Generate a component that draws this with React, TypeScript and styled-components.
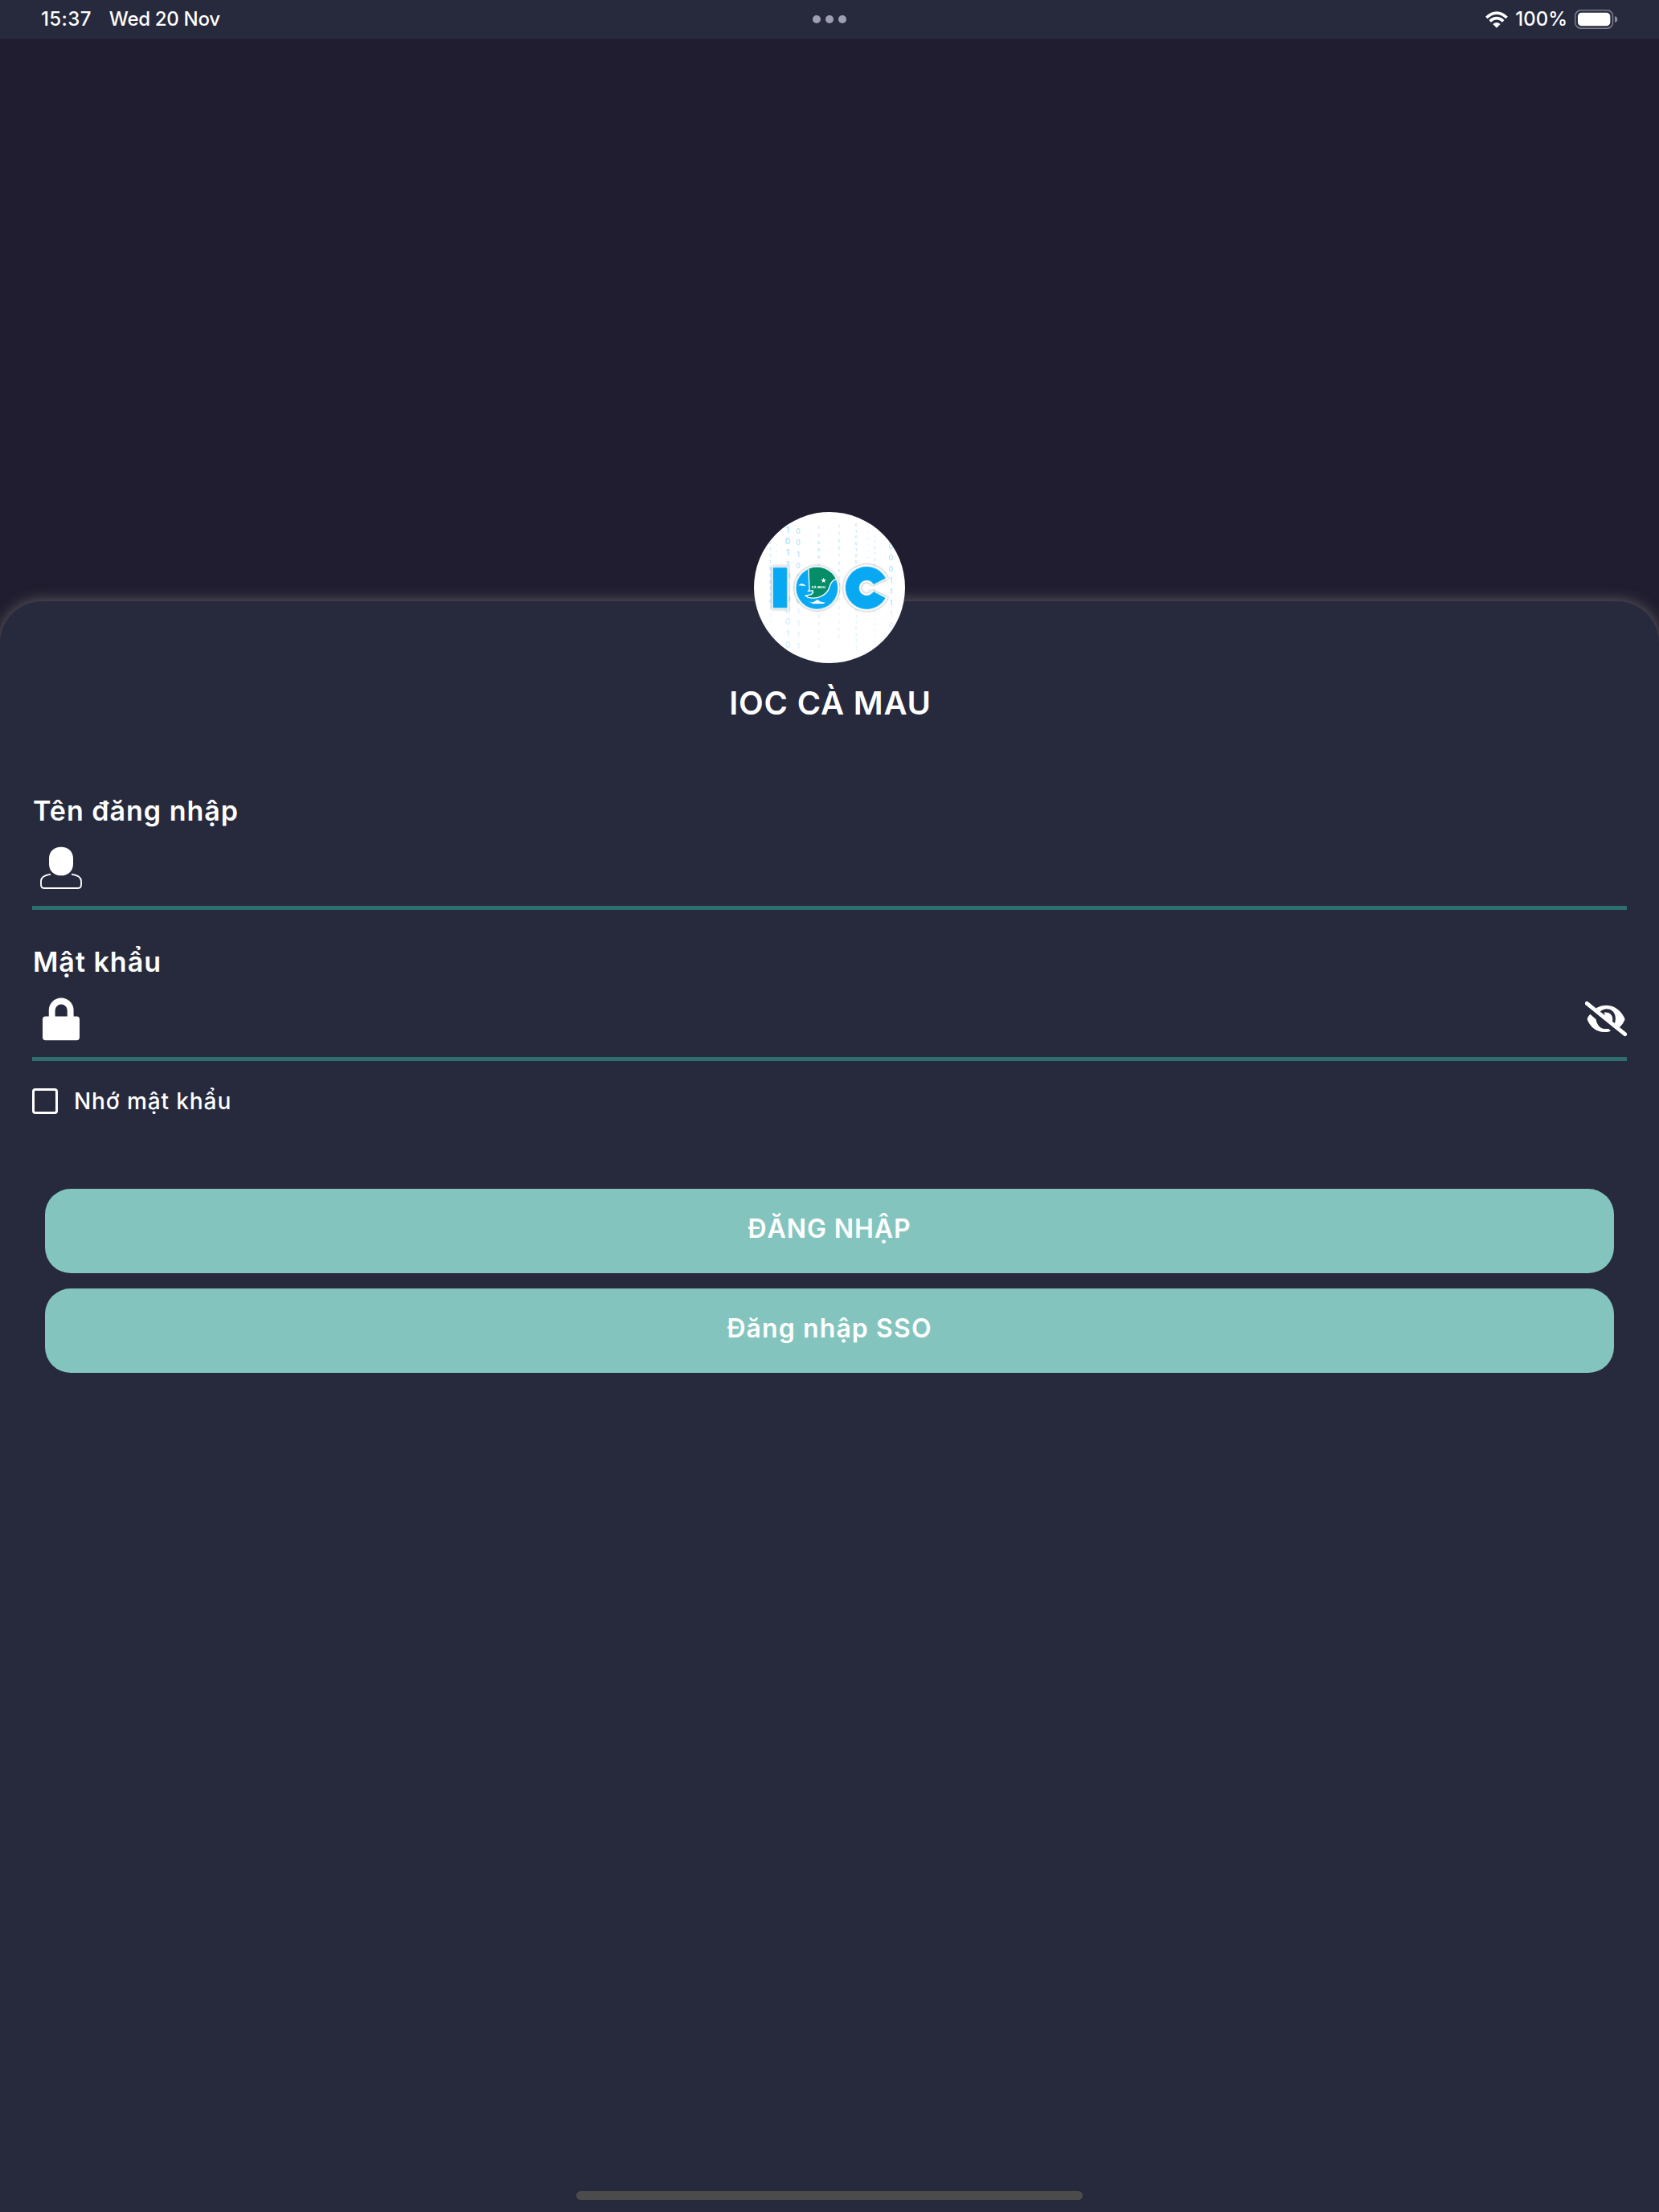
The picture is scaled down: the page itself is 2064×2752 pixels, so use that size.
import React, { useState } from "react";
import styled, { createGlobalStyle } from "styled-components";

const colors = {
  backdrop: "#1f1d2f",
  surface: "#272a3d",
  line: "#2f6e70",
  button: "#83c5be",
  logoBlue: "#09a8f2",
  logoGreen: "#058d68",
};

const GlobalStyle = createGlobalStyle`
  * {
    box-sizing: border-box;
  }

  body {
    margin: 0;
    background: ${colors.surface};
    color: #fff;
    font-family: Inter, "Noto Sans", sans-serif;
  }

  button, input {
    font-family: inherit;
    color: inherit;
  }
`;

const Screen = styled.div`
  display: flex;
  flex-direction: column;
  height: 2752px;
  overflow: hidden;
  background: ${colors.backdrop};
`;

const StatusBar = styled.header`
  display: grid;
  grid-template-columns: 1fr auto 1fr;
  align-items: center;
  flex: none;
  height: 48px;
  padding: 0 51px;
  background: ${colors.surface};
  font-size: 24px;
  font-weight: 500;
  line-height: 48px;
`;

const StatusLeft = styled.div`
  display: flex;
  gap: 22px;
`;

const StatusText = styled.span<{ $spacing?: number }>`
  letter-spacing: ${({ $spacing }) => $spacing ?? 0}px;
  white-space: nowrap;
`;

const StatusRight = styled.div`
  display: flex;
  align-items: center;
  justify-content: flex-end;
  gap: 9px;

  svg {
    display: block;
  }
`;

const Dots = styled.div`
  display: flex;
  gap: 6px;

  i {
    width: 10px;
    height: 10px;
    border-radius: 50%;
    background: #9f9fb3;
  }
`;

const Sheet = styled.main`
  display: flex;
  flex-direction: column;
  align-items: center;
  flex: 1;
  margin-top: 700px;
  border-radius: 52px 52px 0 0;
  background: ${colors.surface};
  box-shadow: 0 0 18px rgba(150, 142, 135, 0.6);
`;

const Logo = styled.svg`
  display: block;
  width: 188px;
  height: 188px;
  margin-top: -111px;
`;

const Title = styled.h1`
  margin: 26px 0 0;
  padding-left: 2px;
  font-size: 40px;
  font-weight: 600;
  line-height: 48px;
  letter-spacing: 0.8px;
`;

const Form = styled.form`
  width: 100%;
  padding: 89px 40px 0;
`;

const Field = styled.label`
  display: block;
  height: 188px;
`;

const FieldLabel = styled.span`
  display: block;
  padding-left: 1px;
  font-size: 34px;
  font-weight: 600;
  line-height: 42px;
  letter-spacing: 1px;
`;

const InputRow = styled.span`
  display: flex;
  align-items: center;
  height: 102px;
  padding: 2px 0 0 6px;
  border-bottom: 5px solid ${colors.line};

  svg {
    flex: none;
    display: block;
  }
`;

const Input = styled.input`
  flex: 1;
  min-width: 0;
  height: 64px;
  padding: 0 16px;
  border: 0;
  outline: 0;
  background: transparent;
  font-size: 30px;
`;

const IconButton = styled.button`
  padding: 0;
  border: 0;
  background: none;
`;

const Remember = styled.label`
  display: flex;
  align-items: center;
  gap: 20px;
  height: 34px;
  margin-top: -11px;
  font-size: 28px;
  font-weight: 500;
  letter-spacing: 0.9px;
`;

const Checkbox = styled.input`
  appearance: none;
  width: 32px;
  height: 32px;
  margin: 0;
  border: 3px solid #fff;
  border-radius: 4px;

  &:checked {
    background: ${colors.button};
  }
`;

const Actions = styled.div`
  display: flex;
  flex-direction: column;
  gap: 19px;
  padding: 92px 16px 0;
`;

const SubmitButton = styled.button<{ $spacing: number }>`
  height: 105px;
  padding: 0 0 6px;
  border: 0;
  border-radius: 32px;
  background: ${colors.button};
  font-size: 32px;
  font-weight: 600;
  letter-spacing: ${({ $spacing }) => $spacing}px;
`;

const HomeIndicator = styled.div`
  width: 630px;
  height: 11px;
  margin: auto 0 15px;
  border-radius: 6px;
  background: #4b4b4b;
`;

const WifiIcon = () => (
  <svg width="28" height="21" viewBox="87 41 84 63" fill="none" stroke="#fff">
    <path d="M91 65Q129 30 167 65" strokeWidth="11" />
    <path d="M104 78Q129 56 154 78" strokeWidth="10.5" />
    <path d="M115 89Q129 77 143 89L129 103Z" fill="#fff" stroke="none" />
  </svg>
);

const BatteryIcon = () => (
  <svg width="54" height="24" viewBox="416 36 162 72">
    <rect x="418.5" y="38.5" width="140" height="67" rx="21" fill="none" stroke="#7d7f8e" strokeWidth="4.5" />
    <rect x="428" y="47" width="121" height="50" rx="14" fill="#fff" />
    <path d="M566 60Q576 63 576 72T566 84Z" fill="#8a8c99" />
  </svg>
);

const PersonIcon = () => (
  <svg width="58" height="58" viewBox="78 242 174 174">
    <path d="M168 250C195 250 213 267 213 293V313C213 339 195 357 168 357S123 339 123 313V293C123 267 141 250 168 250Z" fill="#fff" />
    <path
      d="M129 352C110 355 93 362 93 377V391Q93 404 107 404H229Q243 404 243 391V377C243 362 226 355 207 352"
      fill="none"
      stroke="#fff"
      strokeWidth="5.5"
    />
  </svg>
);

const LockIcon = () => (
  <svg width="58" height="58" viewBox="78 236 174 174">
    <path d="M134 320V290A34.5 34.5 0 0 1 203 290V320" fill="none" stroke="#fff" strokeWidth="23.5" />
    <rect x="99" y="312.5" width="138" height="89" rx="11" fill="#fff" />
  </svg>
);

const EyeOffIcon = () => (
  <svg width="52" height="46" viewBox="216 135 156 138" fill="#fff">
    <path d="M257 163C270 155 283 152 297 152C330 152 355 178 365 204C360 217 353 227 344 235L326 222C337 190 322 166 297 166C287 166 278 170 272 176Z" />
    <path d="M286 180C302 175 319 186 319 204Q319 213 315 220L274 190Q285 191 291 186Z" />
    <path d="M235 185L257 205C260 226 274 239 288 240H304L312 248C302 252 294 252 287 252C255 252 232 228 224 204Q227 193 235 185Z" />
    <path d="M223 145L365 260" stroke="#fff" strokeWidth="15" strokeLinecap="round" />
  </svg>
);

// Falling binary digits behind the logo: x, first baseline, step, size, opacity
const digitColumns: { x: number; y: number; step: number; size: number; opacity: number; digits: string }[] = [
  { x: 114, y: 170, step: 24.5, size: 15, opacity: 0.4, digits: "0111010110111" },
  { x: 138, y: 176, step: 25, size: 8, opacity: 0.35, digits: "101101011011" },
  { x: 180, y: 128, step: 43, size: 31, opacity: 0.45, digits: "10110100010" },
  { x: 219, y: 132, step: 43, size: 25, opacity: 0.4, digits: "00101101111" },
  { x: 295, y: 115, step: 27.7, size: 15, opacity: 0.5, digits: "11000101001001111" },
  { x: 371, y: 110, step: 27.5, size: 13, opacity: 0.42, digits: "1100100101101100" },
  { x: 435, y: 106, step: 22.7, size: 14, opacity: 0.45, digits: "010010010110100110111" },
  { x: 481, y: 106, step: 24, size: 7, opacity: 0.4, digits: "0101101101011010" },
  { x: 504, y: 146, step: 22, size: 14, opacity: 0.32, digits: "1101001011010010110" },
  { x: 566, y: 188, step: 42, size: 28, opacity: 0.4, digits: "00011110" },
];

const IocLogo = () => (
  <Logo viewBox="54 51 564 564" role="img" aria-label="IOC">
    <defs>
      <clipPath id="badge">
        <circle cx="336" cy="333" r="282" />
      </clipPath>
      <clipPath id="globe">
        <circle cx="289" cy="335" r="78" />
      </clipPath>
      <filter id="shade" x="-20%" y="-20%" width="140%" height="140%">
        <feDropShadow dx="0" dy="0" stdDeviation="3" floodColor="#333" floodOpacity="0.75" />
      </filter>
    </defs>
    <circle cx="336" cy="333" r="282" fill="#fff" />
    <g clipPath="url(#badge)" fill="#4dbdf5" fontFamily="Inter, sans-serif" fontWeight="600" textAnchor="middle">
      {digitColumns.map((col) => (
        <g key={col.x} fontSize={col.size} opacity={col.opacity}>
          {col.digits.split("").map((digit, i) => (
            <text key={i} x={col.x} y={col.y + i * col.step} opacity={col.y + i * col.step > 400 ? 0.5 : 1}>
              {digit}
            </text>
          ))}
        </g>
      ))}
    </g>
    <g filter="url(#shade)">
      <rect x="120" y="253" width="64" height="161" fill="#fff" />
      <circle cx="289" cy="335" r="84" fill="#fff" />
      <circle
        cx="475"
        cy="334"
        r="54"
        fill="none"
        stroke="#fff"
        strokeWidth="66"
        pathLength="360"
        strokeDasharray="312 48"
        transform="rotate(24 475 334)"
      />
    </g>
    <rect x="125" y="258" width="53" height="151" fill={colors.logoBlue} />
    <circle cx="289" cy="335" r="78" fill={colors.logoBlue} />
    <circle
      cx="475"
      cy="334"
      r="54"
      fill="none"
      stroke={colors.logoBlue}
      strokeWidth="51"
      pathLength="360"
      strokeDasharray="304 56"
      transform="rotate(28 475 334)"
    />
    <g clipPath="url(#globe)">
      <path
        d="M257 250L261 340L257 346L273 344L275 351L268 359L247 363L257 370C290 378 326 362 335 333C339 315 347 304 372 298V250Z"
        fill={colors.logoGreen}
        stroke="#fff"
        strokeWidth="4"
      />
      <path d="M219 325L231 318L241 321L248 327Z" fill="#fff" />
      <path d="M256 386L274 388L291 379L304 386L321 389L312 394H272L269 389Z" fill="#fff" />
      <path d="M314 296L317 303L324 303L318 308L320 315L314 311L308 315L310 308L304 303L311 303Z" fill="#fff" />
      <text x="295" y="335" fill="#fff" fontFamily="Inter, sans-serif" fontSize="11" fontWeight="900" textAnchor="middle" textLength="52">
        CÀ MAU
      </text>
    </g>
  </Logo>
);

const App: React.FC = () => {
  const [showPassword, setShowPassword] = useState(false);

  return (
    <>
      <GlobalStyle />
      <Screen>
        <StatusBar>
          <StatusLeft>
            <StatusText $spacing={0.4}>15:37</StatusText>
            <StatusText $spacing={-0.3}>Wed 20 Nov</StatusText>
          </StatusLeft>
          <Dots>
            <i />
            <i />
            <i />
          </Dots>
          <StatusRight>
            <WifiIcon />
            <StatusText>100%</StatusText>
            <BatteryIcon />
          </StatusRight>
        </StatusBar>
        <Sheet>
          <IocLogo />
          <Title>IOC CÀ MAU</Title>
          <Form onSubmit={(e) => e.preventDefault()}>
            <Field>
              <FieldLabel>Tên đăng nhập</FieldLabel>
              <InputRow>
                <PersonIcon />
                <Input type="text" />
              </InputRow>
            </Field>
            <Field>
              <FieldLabel>Mật khẩu</FieldLabel>
              <InputRow>
                <LockIcon />
                <Input type={showPassword ? "text" : "password"} />
                <IconButton type="button" onClick={() => setShowPassword(!showPassword)}>
                  <EyeOffIcon />
                </IconButton>
              </InputRow>
            </Field>
            <Remember>
              <Checkbox type="checkbox" />
              Nhớ mật khẩu
            </Remember>
            <Actions>
              <SubmitButton type="submit" $spacing={0.9}>
                ĐĂNG NHẬP
              </SubmitButton>
              <SubmitButton type="button" $spacing={1.1}>
                Đăng nhập SSO
              </SubmitButton>
            </Actions>
          </Form>
          <HomeIndicator />
        </Sheet>
      </Screen>
    </>
  );
};

export default App;
